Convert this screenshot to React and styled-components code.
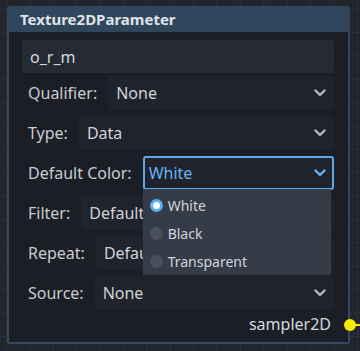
import React from "react";
import styled, { createGlobalStyle } from "styled-components";

const GlobalStyle = createGlobalStyle`
  html, body {
    margin: 0;
    padding: 0;
  }
  body {
    width: 360px;
    height: 351px;
    overflow: hidden;
    background-color: #22252c;
    background-image:
      linear-gradient(to right, #2b2f37 1px, transparent 1px),
      linear-gradient(to bottom, #2b2f37 1px, transparent 1px);
    background-size: 23.4px 23.4px;
    background-position: 6px 8.5px;
    font-family: "Noto Sans", "Open Sans", sans-serif;
  }
`;

const Canvas = styled.div`
  padding: 6px 0 0 7px;
`;

const Node = styled.div`
  position: relative;
  width: 343px;
  box-sizing: border-box;
`;

const Header = styled.div`
  height: 26px;
  background: #2f465d;
  border-radius: 3px 3px 0 0;
  padding-left: 13px;
  color: #e0e4e9;
  font-weight: bold;
  font-size: 15px;
  line-height: 27px;
`;

const Body = styled.div`
  background: #1b1e25;
  border: 2px solid #34495f;
  border-top: none;
  border-radius: 0 0 3px 3px;
  padding: 8px 14px 4px 13px;
  display: flex;
  flex-direction: column;
`;

const NameInput = styled.div`
  height: 33px;
  background: #262a33;
  border-radius: 3px;
  padding-left: 8px;
  display: flex;
  align-items: center;
  color: #d4d7dc;
  font-size: 16px;
  margin-bottom: 3px;
`;

const Rows = styled.div`
  display: flex;
  flex-direction: column;
  gap: 6px;
`;

const Row = styled.div`
  display: flex;
  align-items: center;
  gap: 11px;
  height: 34px;
`;

const Label = styled.span`
  padding-left: 6px;
  color: #c9ccd2;
  font-size: 16px;
  white-space: nowrap;
`;

const Select = styled.div`
  position: relative;
  flex: 1;
  height: 34px;
  box-sizing: border-box;
  background: #20232b;
  border-radius: 3px;
  border: 2px solid ${(p) => (p.$focused ? "#5ca8ee" : "transparent")};
  padding: 0 6px 0 ${(p) => (p.$focused ? "4px" : "6px")};
  display: flex;
  align-items: center;
  justify-content: space-between;
  color: ${(p) => (p.$focused ? "#67b2f4" : "#d0d3d8")};
  font-size: 16px;
`;

const Chevron = ({ color }) => (
  <svg width="12" height="8" viewBox="0 0 12 8">
    <path
      d="M1.5 1.5 L6 6 L10.5 1.5"
      fill="none"
      stroke={color}
      strokeWidth="2.4"
      strokeLinecap="round"
      strokeLinejoin="round"
    />
  </svg>
);

const Popup = styled.div`
  position: absolute;
  left: -2px;
  top: calc(100% + 1px);
  width: 188px;
  height: 86px;
  box-sizing: border-box;
  padding-top: 2px;
  background: #353b47;
  z-index: 2;
`;

const Option = styled.div`
  height: 28px;
  display: flex;
  align-items: center;
  gap: 5px;
  padding-left: 7px;
  color: #d0d4da;
  font-size: 14px;
`;

const Radio = styled.span`
  width: 13px;
  height: 13px;
  border-radius: 50%;
  box-sizing: border-box;
  background: ${(p) => (p.$checked ? "#fff" : "#4a505b")};
  border: ${(p) => (p.$checked ? "3px solid #5aaff4" : "none")};
`;

const OutputRow = styled.div`
  height: 28px;
  display: flex;
  align-items: center;
  justify-content: flex-end;
  padding-right: 3px;
  color: #d4d7dc;
  font-size: 16px;
`;

const Port = styled.span`
  position: absolute;
  right: -6px;
  bottom: 13px;
  width: 12px;
  height: 12px;
  border-radius: 50%;
  background: #f5ec00;
  &::after {
    content: "";
    position: absolute;
    left: 11px;
    top: 5px;
    width: 6px;
    height: 2px;
    background: #f5ec00;
  }
`;

const options = [
  { name: "White", checked: true },
  { name: "Black" },
  { name: "Transparent" },
];

const App = () => {
  return (
    <>
      <GlobalStyle />
      <Canvas>
        <Node>
          <Header>Texture2DParameter</Header>
          <Body>
            <NameInput>o_r_m</NameInput>
            <Rows>
              <Row>
                <Label>Qualifier:</Label>
                <Select>
                  None
                  <Chevron color="#b0b4bb" />
                </Select>
              </Row>
              <Row>
                <Label>Type:</Label>
                <Select>
                  Data
                  <Chevron color="#b0b4bb" />
                </Select>
              </Row>
              <Row>
                <Label>Default Color:</Label>
                <Select $focused>
                  White
                  <Chevron color="#67b2f4" />
                  <Popup>
                    {options.map((o) => (
                      <Option key={o.name}>
                        <Radio $checked={o.checked} />
                        {o.name}
                      </Option>
                    ))}
                  </Popup>
                </Select>
              </Row>
              <Row>
                <Label>Filter:</Label>
                <Select>
                  Default
                  <Chevron color="#b0b4bb" />
                </Select>
              </Row>
              <Row>
                <Label>Repeat:</Label>
                <Select>
                  Default
                  <Chevron color="#b0b4bb" />
                </Select>
              </Row>
              <Row>
                <Label>Source:</Label>
                <Select>
                  None
                  <Chevron color="#b0b4bb" />
                </Select>
              </Row>
            </Rows>
            <OutputRow>sampler2D</OutputRow>
          </Body>
          <Port />
        </Node>
      </Canvas>
    </>
  );
};

export default App;
